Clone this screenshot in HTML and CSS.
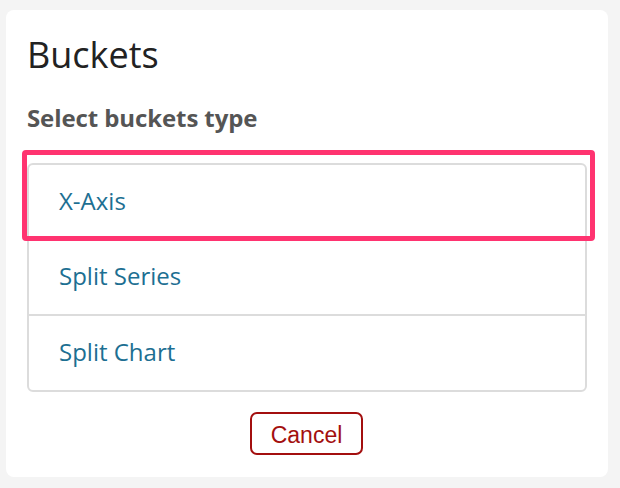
FILE: index.html
```html
<!DOCTYPE html>
<html>
<head>
<meta charset="utf-8">
<link rel="stylesheet" href="styles.css">
</head>
<body>
<div class="card">
  <h1 class="title">Buckets</h1>
  <h2 class="subtitle">Select buckets type</h2>
  <div class="list-wrap">
    <ul class="list">
      <li class="row"><a class="row-link">X-Axis</a></li>
      <li class="row"><a class="row-link">Split Series</a></li>
      <li class="row"><a class="row-link">Split Chart</a></li>
    </ul>
    <div class="highlight"></div>
  </div>
  <div class="actions">
    <button class="cancel">Cancel</button>
  </div>
</div>
</body>
</html>
```
FILE: styles.css
```css
html, body {
  margin: 0;
  padding: 0;
  background: #f4f4f4;
}
body {
  font-family: "Open Sans", "Noto Sans", sans-serif;
  padding: 10px 12px 11px 6px;
}
.card {
  box-sizing: border-box;
  width: 602px;
  height: 467px;
  background: #fff;
  border-radius: 8px;
  padding: 23px 21px 22px 21px;
  display: flex;
  flex-direction: column;
}
.title {
  margin: 0;
  font-size: 36px;
  line-height: 44px;
  font-weight: 400;
  color: #222;
}
.subtitle {
  margin: 27px 0 0 0;
  font-size: 24px;
  line-height: 28px;
  font-weight: 700;
  color: #555;
  letter-spacing: -0.1px;
}
.list-wrap {
  position: relative;
  margin-top: 31px;
}
.list {
  list-style: none;
  margin: 0;
  padding: 0;
  border: 2px solid #dcdcdc;
  border-radius: 6px;
}
.row {
  box-sizing: border-box;
  height: 74px;
  display: flex;
  align-items: center;
  padding: 0 0 4px 30px;
  border-top: 2px solid #dcdcdc;
}
.row:first-child {
  border-top: none;
  height: 73px;
  padding-bottom: 3px;
}
.row + .row {
  height: 76px;
}
.row-link {
  font-size: 24px;
  color: #1d6f92;
}
.highlight {
  position: absolute;
  left: -5px;
  top: -13px;
  width: 573px;
  height: 91px;
  box-sizing: border-box;
  border: 5px solid #ff3370;
  border-radius: 4px;
}
.actions {
  margin-top: auto;
  display: flex;
  justify-content: center;
}
.cancel {
  box-sizing: border-box;
  width: 113px;
  height: 43px;
  margin-left: -1px;
  background: #fff;
  border: 2px solid #a30f0f;
  border-radius: 7px;
  color: #a30f0f;
  font-family: "Liberation Sans", Arial, sans-serif;
  font-size: 23px;
  padding: 3px 0 0 0;
}
```
